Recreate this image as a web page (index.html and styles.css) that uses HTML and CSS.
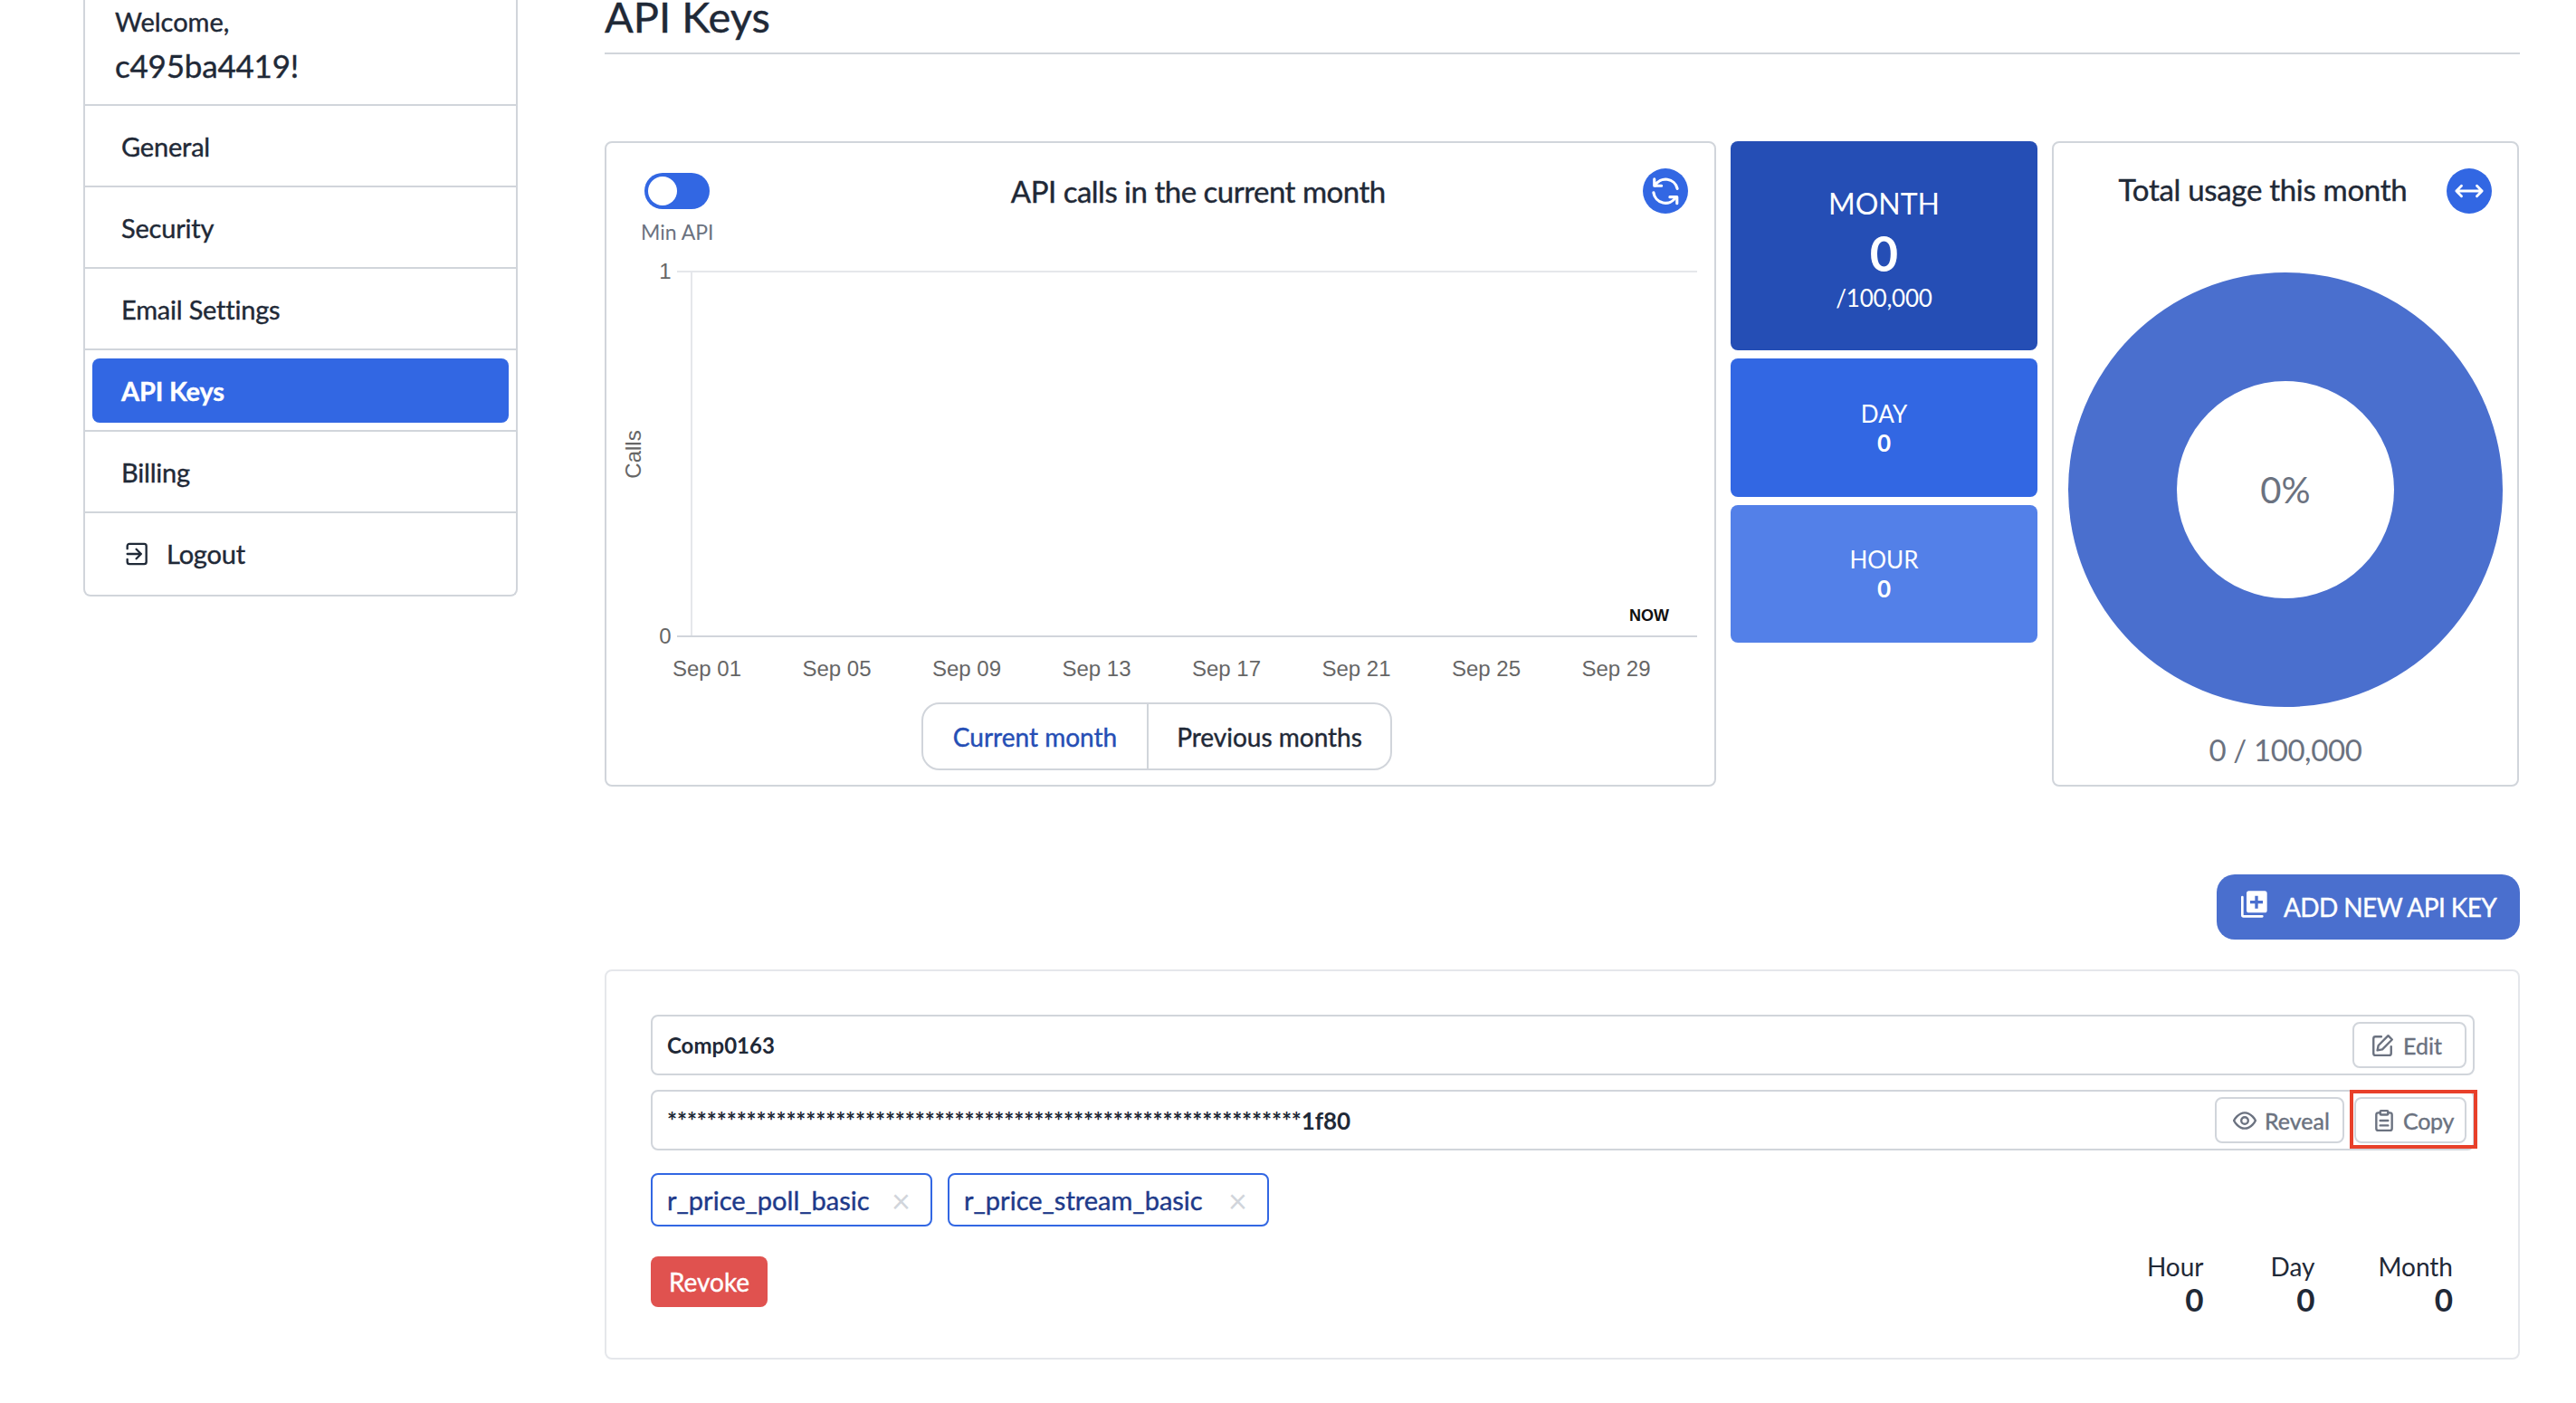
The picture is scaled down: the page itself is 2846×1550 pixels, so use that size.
FILE: index.html
```html
<!DOCTYPE html>
<html>
<head>
    <title>API Keys</title>
    <link rel="stylesheet" href="styles.css">
</head>
<body>
    <div class="shell">
        <aside class="sidebar">
            <div class="welcome">
                <div class="welcome-label">Welcome,</div>
                <div class="welcome-name">c495ba4419!</div>
            </div>
            <div class="nav-row"><a class="nav-item">General</a></div>
            <div class="nav-row"><a class="nav-item">Security</a></div>
            <div class="nav-row"><a class="nav-item">Email Settings</a></div>
            <div class="nav-row"><a class="nav-item active">API Keys</a></div>
            <div class="nav-row"><a class="nav-item">Billing</a></div>
            <div class="nav-row">
                <a class="nav-item">
                    <svg class="logout-icon" viewBox="0 0 24 24" fill="none" stroke="currentColor" stroke-width="2" stroke-linecap="round" stroke-linejoin="round">
                        <path d="M4 7V4.5a2 2 0 0 1 2-2h14a2 2 0 0 1 2 2v15a2 2 0 0 1-2 2H6a2 2 0 0 1-2-2V17"/>
                        <path d="M4 12h13M12.5 7.5L17 12l-4.5 4.5"/>
                    </svg>
                    Logout
                </a>
            </div>
        </aside>

        <main class="content">
            <header class="page-head">
                <h1>API Keys</h1>
            </header>

            <section class="usage-row">
                <div class="card chart-card">
                    <div class="chart-top">
                        <div class="toggle-wrap">
                            <span class="toggle"><span class="knob"></span></span>
                            <span class="toggle-label">Min API</span>
                        </div>
                        <h2 class="card-title">API calls in the current month</h2>
                        <button class="round-btn refresh-btn">
                            <svg viewBox="0 0 24 24" fill="none" stroke="#fff" stroke-width="1.8" stroke-linecap="round" stroke-linejoin="round">
                                <path d="M5.5 8.5a7.6 7.6 0 0 1 14 2"/>
                                <path d="M5 4.5v4.2h4.5"/>
                                <path d="M4.5 13a7.6 7.6 0 0 0 14 3"/>
                                <path d="M19.3 19.8v-4h-4.5"/>
                            </svg>
                        </button>
                    </div>
                    <svg class="chart" viewBox="0 0 1224 503">
                        <g class="grid">
                            <line x1="78" y1="27" x2="1205" y2="27"/>
                            <line x1="94" y1="27" x2="94" y2="430"/>
                        </g>
                        <line class="axis" x1="78" y1="430" x2="1205" y2="430"/>
                        <g class="ticks">
                            <text x="65" y="35" text-anchor="middle">1</text>
                            <text x="65" y="438" text-anchor="middle">0</text>
                            <text x="111" y="474" text-anchor="middle">Sep 01</text>
                            <text x="254.5" y="474" text-anchor="middle">Sep 05</text>
                            <text x="398" y="474" text-anchor="middle">Sep 09</text>
                            <text x="541.5" y="474" text-anchor="middle">Sep 13</text>
                            <text x="685" y="474" text-anchor="middle">Sep 17</text>
                            <text x="828.5" y="474" text-anchor="middle">Sep 21</text>
                            <text x="972" y="474" text-anchor="middle">Sep 25</text>
                            <text x="1115.5" y="474" text-anchor="middle">Sep 29</text>
                            <text x="38" y="229" text-anchor="middle" transform="rotate(-90 38 229)">Calls</text>
                        </g>
                        <text class="now" x="1152" y="413" text-anchor="middle">NOW</text>
                    </svg>
                    <div class="tabs">
                        <span class="tab current">Current month</span>
                        <span class="tab">Previous months</span>
                    </div>
                </div>

                <div class="tiles">
                    <div class="tile tile-month">
                        <div class="tile-name">MONTH</div>
                        <div class="tile-value">0</div>
                        <div class="tile-limit">/100,000</div>
                    </div>
                    <div class="tile tile-day">
                        <div class="tile-name">DAY</div>
                        <div class="tile-value">0</div>
                    </div>
                    <div class="tile tile-hour">
                        <div class="tile-name">HOUR</div>
                        <div class="tile-value">0</div>
                    </div>
                </div>

                <div class="card total-card">
                    <div class="total-top">
                        <h2 class="card-title">Total usage this month</h2>
                        <button class="round-btn swap-btn">
                            <svg viewBox="0 0 24 24" fill="none" stroke="#fff" stroke-width="2" stroke-linecap="round" stroke-linejoin="round">
                                <path d="M2 12h20M6 8l-4 4 4 4M18 8l4 4-4 4"/>
                            </svg>
                        </button>
                    </div>
                    <div class="donut"><div class="donut-hole">0%</div></div>
                    <div class="total-count">0 / 100,000</div>
                </div>
            </section>

            <div class="add-row">
                <button class="add-btn">
                    <svg viewBox="0 0 24 24" fill="#fff">
                        <path d="M8 1h13a2 2 0 0 1 2 2v14a2 2 0 0 1-2 2H8a2 2 0 0 1-2-2V3a2 2 0 0 1 2-2zm5 4v4H9v2.5h4v4h2.5v-4h4V9h-4V5z" fill-rule="evenodd"/>
                        <path d="M2.5 6v15a1 1 0 0 0 1 1H19" fill="none" stroke="#fff" stroke-width="2" stroke-linecap="round"/>
                    </svg>
                    ADD NEW API KEY
                </button>
            </div>

            <section class="card key-card">
                <div class="key-field">
                    <span class="key-name">Comp0163</span>
                    <button class="mini-btn btn-edit">
                        <svg viewBox="0 0 24 24" fill="none" stroke="currentColor" stroke-width="2.2" stroke-linecap="round" stroke-linejoin="round">
                            <path d="M11 3H5a2 2 0 0 0-2 2v15a2 2 0 0 0 2 2h14a2 2 0 0 0 2-2v-7"/>
                            <path d="M18 2l4 4-10 10-5 1 1-5z"/>
                        </svg>
                        Edit
                    </button>
                </div>
                <div class="key-field key-secret-row">
                    <span class="key-secret">****************************************************************1f80</span>
                    <div class="secret-actions">
                        <button class="mini-btn btn-reveal">
                            <svg viewBox="0 0 24 24" fill="none" stroke="currentColor" stroke-width="2.2" stroke-linecap="round" stroke-linejoin="round">
                                <path d="M1 12s4-8 11-8 11 8 11 8-4 8-11 8-11-8-11-8z"/>
                                <circle cx="12" cy="12" r="3.5"/>
                            </svg>
                            Reveal
                        </button>
                        <button class="mini-btn btn-copy">
                            <svg viewBox="0 0 24 24" fill="none" stroke="currentColor" stroke-width="2.2" stroke-linecap="round" stroke-linejoin="round">
                                <path d="M8 4H6a2 2 0 0 0-2 2v14a2 2 0 0 0 2 2h12a2 2 0 0 0 2-2V6a2 2 0 0 0-2-2h-2"/>
                                <rect x="8" y="2" width="8" height="4" rx="1"/>
                                <path d="M8 12h8M8 17h8"/>
                            </svg>
                            Copy
                        </button>
                        <span class="highlight"></span>
                    </div>
                </div>
                <div class="chips">
                    <span class="chip">r_price_poll_basic <span class="chip-x">×</span></span>
                    <span class="chip">r_price_stream_basic <span class="chip-x">×</span></span>
                </div>
                <div class="key-foot">
                    <button class="revoke">Revoke</button>
                    <div class="key-stats">
                        <div class="stat stat-hour"><span>Hour</span><strong>0</strong></div>
                        <div class="stat stat-day"><span>Day</span><strong>0</strong></div>
                        <div class="stat stat-month"><span>Month</span><strong>0</strong></div>
                    </div>
                </div>
            </section>
        </main>
    </div>
</body>
</html>
```

FILE: styles.css
```css
html, body {
    margin: 0;
    height: 100%;
    overflow: hidden;
    background: #fff;
}
body {
    font-family: "Lato", "Liberation Sans", sans-serif;
    color: #1f2937;
}
* {
    box-sizing: border-box;
}
button {
    font-family: inherit;
    cursor: pointer;
}
.shell {
    display: flex;
    align-items: flex-start;
    padding-left: 92px;
}

/* no medium cut of the font here, so thicken these a little */
.welcome-name, .nav-item, .page-head h1, .card-title, .tab, .add-btn,
.mini-btn, .chip, .revoke, .welcome-label {
    -webkit-text-stroke: 0.4px currentColor;
}

/* sidebar */
.sidebar {
    width: 480px;
    flex-shrink: 0;
    border: 2px solid #d1d5db;
    border-top: none;
    border-radius: 0 0 8px 8px;
}
.welcome {
    height: 117px;
    padding: 6px 0 0 33px;
    border-bottom: 2px solid #d1d5db;
}
.welcome-label {
    font-size: 29px;
    line-height: 36px;
}
.welcome-name {
    font-size: 35px;
    line-height: 48px;
    margin-top: 6px;
    letter-spacing: -0.2px;
}
.nav-row {
    height: 90px;
    padding: 9px 8px;
    border-bottom: 2px solid #d1d5db;
}
.nav-row:last-child {
    border-bottom: none;
}
.nav-item {
    display: flex;
    align-items: center;
    height: 71px;
    padding-left: 32px;
    font-size: 29px;
    letter-spacing: -0.2px;
    border-radius: 8px;
}
.nav-item.active {
    background: #3267e3;
    color: #fff;
    font-weight: 700;
}
.logout-icon {
    width: 28px;
    height: 28px;
    margin: 0 20px 0 2px;
}

/* main column */
.content {
    width: 2116px;
    margin-left: 96px;
}
.page-head {
    height: 60px;
    border-bottom: 2px solid #d1d5db;
}
.page-head h1 {
    margin: 0;
    font-size: 47px;
    line-height: 36px;
    font-weight: 400;
}
.usage-row {
    display: flex;
    align-items: flex-start;
    gap: 16px;
    margin-top: 96px;
}
.card {
    border: 2px solid #d1d5db;
    border-radius: 8px;
    background: #fff;
}
.card-title {
    margin: 0;
    font-size: 33px;
    font-weight: 400;
    letter-spacing: -0.5px;
}

/* chart card */
.chart-card {
    width: 1228px;
    height: 713px;
}
.chart-top {
    display: flex;
    height: 115px;
    padding: 28px 29px 0 42px;
    justify-content: space-between;
    align-items: flex-start;
}
.toggle-wrap {
    display: flex;
    flex-direction: column;
    align-items: center;
    gap: 11px;
    margin-left: -4px;
    margin-top: 5px;
}
.toggle {
    display: flex;
    align-items: center;
    width: 72px;
    height: 40px;
    padding: 4px;
    border-radius: 20px;
    background: #3267e3;
}
.knob {
    width: 32px;
    height: 32px;
    border-radius: 50%;
    background: #fff;
}
.toggle-label {
    font-size: 23px;
    color: #6b7280;
}
.chart-top .card-title {
    margin: 5px 0 0 44px;
}
.round-btn {
    display: flex;
    align-items: center;
    justify-content: center;
    width: 50px;
    height: 50px;
    padding: 0;
    border: none;
    border-radius: 50%;
    background: #3267e3;
}
.refresh-btn svg {
    width: 42px;
    height: 42px;
}
.chart {
    display: block;
    width: 1224px;
    height: 503px;
}
.grid line {
    stroke: #e5e7eb;
    stroke-width: 2;
}
.axis {
    stroke: #d1d5db;
    stroke-width: 2;
}
.ticks text {
    font-family: "Liberation Sans", sans-serif;
    font-size: 24px;
    fill: #666;
}
.now {
    font-family: "Liberation Sans", sans-serif;
    font-size: 18px;
    font-weight: 700;
    fill: #111;
}
.tabs {
    display: flex;
    width: 520px;
    height: 75px;
    margin-left: 348px;
    border: 2px solid #d1d5db;
    border-radius: 20px;
}
.tab {
    display: flex;
    align-items: center;
    justify-content: center;
    font-size: 28px;
    flex: 1 1 auto;
}
.tab + .tab {
    border-left: 2px solid #d1d5db;
}
.tab.current {
    width: 247px;
    flex: none;
    color: #254eb5;
}

/* month/day/hour tiles */
.tiles {
    display: flex;
    flex-direction: column;
    gap: 9px;
    width: 339px;
    flex-shrink: 0;
}
.tile {
    display: flex;
    flex-direction: column;
    align-items: center;
    justify-content: center;
    border-radius: 8px;
    color: #fff;
    font-size: 26px;
}
.tile-value {
    font-weight: 700;
}
.tile-month {
    height: 231px;
    padding-top: 7px;
    background: #254eb5;
}
.tile-month .tile-name {
    font-size: 32px;
}
.tile-month .tile-value {
    font-size: 54px;
    line-height: 72px;
}
.tile-limit {
    margin-top: -3px;
    letter-spacing: -0.2px;
}
.tile-day {
    height: 153px;
    background: #3267e3;
}
.tile-hour {
    height: 152px;
    background: #5380e8;
}

/* total usage */
.total-card {
    width: 516px;
    height: 713px;
    display: flex;
    flex-direction: column;
    align-items: center;
}
.total-top {
    position: relative;
    width: 100%;
    height: 143px;
    padding-top: 31px;
    text-align: center;
}
.total-top .card-title {
    margin-right: 50px;
    letter-spacing: -0.3px;
}
.swap-btn {
    position: absolute;
    top: 28px;
    right: 28px;
}
.swap-btn svg {
    width: 34px;
    height: 34px;
}
.donut {
    display: flex;
    align-items: center;
    justify-content: center;
    width: 480px;
    height: 480px;
    border-radius: 50%;
    background: #4a6fce;
}
.donut-hole {
    display: flex;
    align-items: center;
    justify-content: center;
    width: 240px;
    height: 240px;
    border-radius: 50%;
    background: #fff;
    font-size: 40px;
    color: #6b7280;
}
.total-count {
    margin-top: 27px;
    font-size: 33px;
    letter-spacing: -0.4px;
    color: #6b7280;
}

/* add button */
.add-row {
    display: flex;
    justify-content: flex-end;
    margin-top: 97px;
}
.add-btn {
    display: flex;
    align-items: center;
    gap: 17px;
    width: 335px;
    height: 72px;
    padding: 0 0 0 25px;
    border: none;
    border-radius: 20px;
    background: #4a6fce;
    color: #fff;
    font-size: 28px;
    letter-spacing: -0.6px;
    white-space: nowrap;
}
.add-btn svg {
    width: 32px;
    height: 32px;
    margin-top: -6px;
}

/* key card */
.key-card {
    height: 431px;
    margin-top: 33px;
    padding: 48px 48px 0 49px;
    border-color: #e5e7eb;
}
.key-field {
    display: flex;
    align-items: center;
    justify-content: space-between;
    height: 67px;
    padding: 0 7px 0 16px;
    border: 2px solid #d1d5db;
    border-radius: 8px;
}
.key-secret-row {
    margin-top: 16px;
}
.key-name {
    font-size: 24px;
    font-weight: 700;
}
.key-secret {
    font-size: 26px;
    font-weight: 700;
    letter-spacing: -0.1px;
}
.secret-actions {
    position: relative;
    display: flex;
    gap: 11px;
}
.mini-btn {
    display: flex;
    align-items: center;
    height: 51px;
    padding: 0;
    border: 2px solid #d1d5db;
    border-radius: 8px;
    background: #fff;
    color: #6b7280;
    font-size: 25px;
}
.mini-btn svg {
    width: 26px;
    height: 26px;
}
.btn-edit {
    width: 126px;
    padding-left: 18px;
    gap: 10px;
}
.btn-reveal {
    width: 143px;
    padding-left: 18px;
    gap: 9px;
}
.btn-copy {
    width: 124px;
    padding-left: 18px;
    gap: 8px;
    letter-spacing: -0.3px;
}
.highlight {
    position: absolute;
    top: -8px;
    right: -12px;
    width: 141px;
    height: 65px;
    border: 4px solid #e8402a;
}
.chips {
    display: flex;
    gap: 17px;
    margin-top: 25px;
}
.chip {
    display: flex;
    align-items: center;
    justify-content: space-between;
    height: 59px;
    padding: 0 22px 0 16px;
    border: 2px solid #3267e3;
    border-radius: 8px;
    color: #1e3a8a;
    font-size: 29px;
}
.chip:first-child {
    width: 311px;
}
.chip:last-child {
    width: 355px;
}
.chip-x {
    font-size: 36px;
    line-height: 1;
    color: #d1d5db;
    -webkit-text-stroke: 0;
}
.key-foot {
    display: flex;
    justify-content: space-between;
    align-items: flex-start;
    margin-top: 33px;
}
.revoke {
    width: 129px;
    height: 56px;
    padding: 0;
    border: none;
    border-radius: 8px;
    background: #e0524f;
    color: #fff;
    font-size: 28px;
}
.key-stats {
    display: flex;
    margin-top: -7px;
    margin-right: 24px;
}
.stat {
    display: flex;
    flex-direction: column;
    align-items: flex-end;
    font-size: 28px;
    line-height: 36px;
}
.stat strong {
    font-size: 35px;
}
.stat-day {
    margin-left: 74px;
}
.stat-month {
    margin-left: 70px;
}
```
